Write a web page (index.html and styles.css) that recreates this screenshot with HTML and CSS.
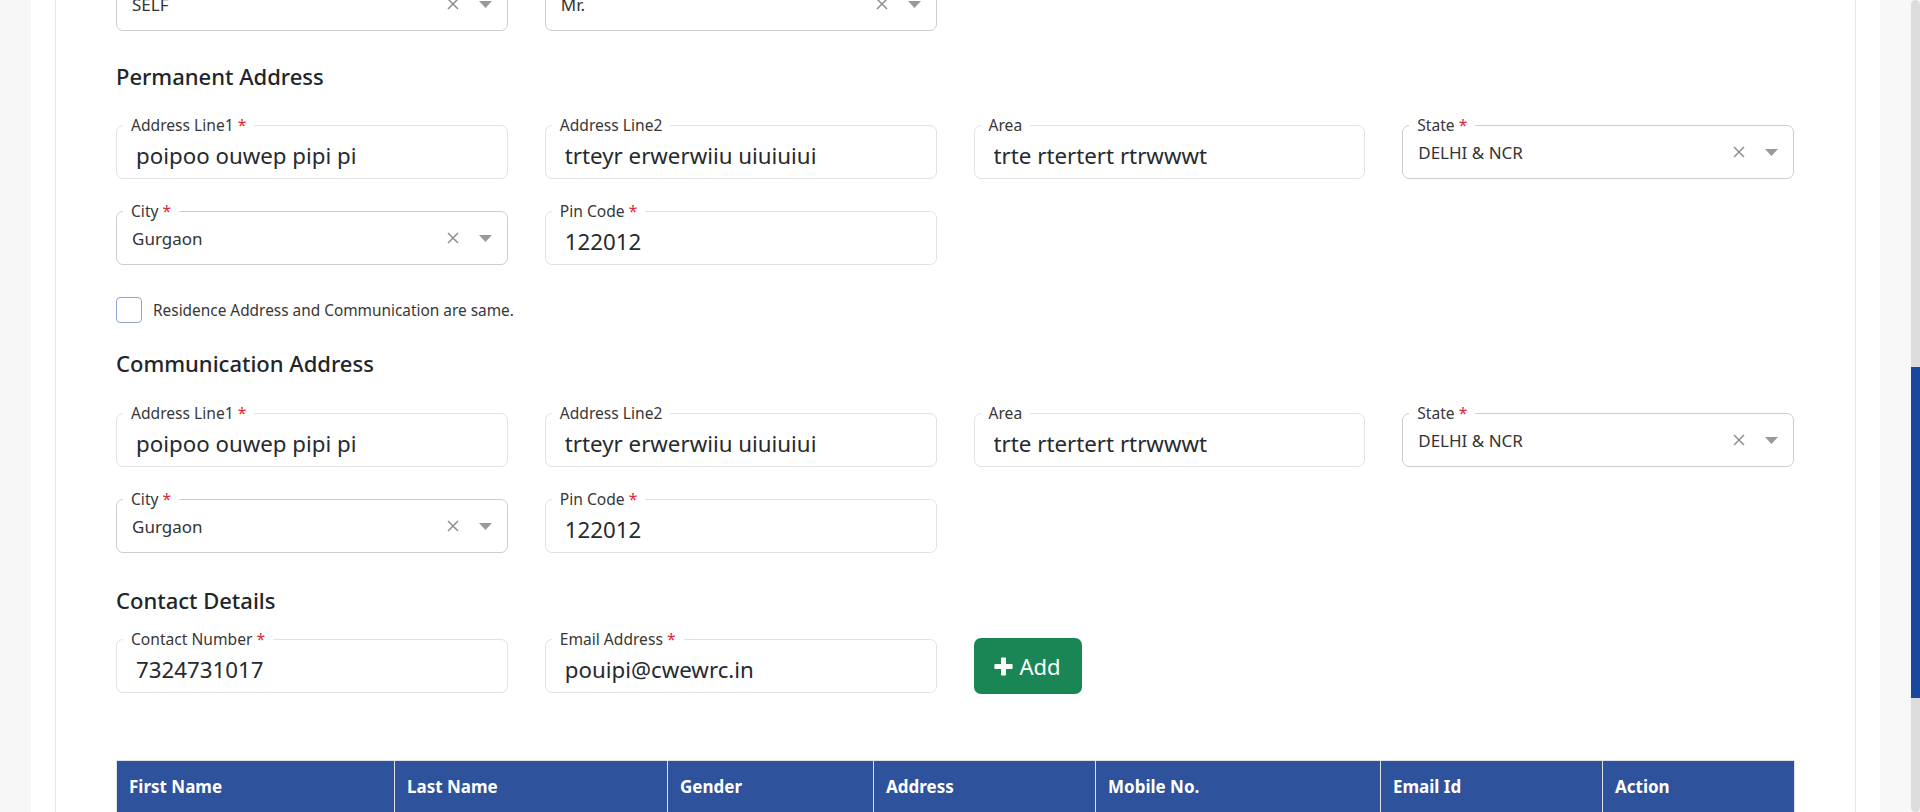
FILE: index.html
```html
<!DOCTYPE html>
<html lang="en">
<head>
<meta charset="utf-8">
<title>Address Details</title>
<link rel="stylesheet" href="styles.css">
</head>
<body>
<div class="page">
  <div class="wrap">
    <div class="card">
      <div class="row row-top">
        <div class="fld sel">
          <span class="sval">SELF</span>
          <span class="clr"><svg width="12" height="12" viewBox="0 0 12 12"><path d="M1 1L11 11M11 1L1 11" stroke="#8f8f8f" stroke-width="1.5"/></svg></span>
          <span class="arr"><svg width="13" height="7" viewBox="0 0 13 7"><path d="M0 0H13L6.5 7Z" fill="#999"/></svg></span>
        </div>
        <div class="fld sel">
          <span class="sval">Mr.</span>
          <span class="clr"><svg width="12" height="12" viewBox="0 0 12 12"><path d="M1 1L11 11M11 1L1 11" stroke="#8f8f8f" stroke-width="1.5"/></svg></span>
          <span class="arr"><svg width="13" height="7" viewBox="0 0 13 7"><path d="M0 0H13L6.5 7Z" fill="#999"/></svg></span>
        </div>
      </div>

      <h5 class="sec sec-first">Permanent Address</h5>
      <div class="row">
        <div class="fld"><label class="lbl">Address Line1 <span class="req">*</span></label><input class="inp" value="poipoo ouwep pipi pi"></div>
        <div class="fld"><label class="lbl">Address Line2</label><input class="inp" value="trteyr erwerwiiu uiuiuiui"></div>
        <div class="fld"><label class="lbl">Area</label><input class="inp" value="trte rtertert rtrwwwt"></div>
        <div class="fld sel"><label class="lbl">State <span class="req">*</span></label>
          <span class="sval">DELHI &amp; NCR</span>
          <span class="clr"><svg width="12" height="12" viewBox="0 0 12 12"><path d="M1 1L11 11M11 1L1 11" stroke="#8f8f8f" stroke-width="1.5"/></svg></span>
          <span class="arr"><svg width="13" height="7" viewBox="0 0 13 7"><path d="M0 0H13L6.5 7Z" fill="#999"/></svg></span>
        </div>
      </div>
      <div class="row row-next">
        <div class="fld sel"><label class="lbl">City <span class="req">*</span></label>
          <span class="sval">Gurgaon</span>
          <span class="clr"><svg width="12" height="12" viewBox="0 0 12 12"><path d="M1 1L11 11M11 1L1 11" stroke="#8f8f8f" stroke-width="1.5"/></svg></span>
          <span class="arr"><svg width="13" height="7" viewBox="0 0 13 7"><path d="M0 0H13L6.5 7Z" fill="#999"/></svg></span>
        </div>
        <div class="fld"><label class="lbl">Pin Code <span class="req">*</span></label><input class="inp" value="122012"></div>
      </div>

      <label class="chk"><input type="checkbox" class="box"><span>Residence Address and Communication are same.</span></label>

      <h5 class="sec sec-second">Communication Address</h5>
      <div class="row">
        <div class="fld"><label class="lbl">Address Line1 <span class="req">*</span></label><input class="inp" value="poipoo ouwep pipi pi"></div>
        <div class="fld"><label class="lbl">Address Line2</label><input class="inp" value="trteyr erwerwiiu uiuiuiui"></div>
        <div class="fld"><label class="lbl">Area</label><input class="inp" value="trte rtertert rtrwwwt"></div>
        <div class="fld sel"><label class="lbl">State <span class="req">*</span></label>
          <span class="sval">DELHI &amp; NCR</span>
          <span class="clr"><svg width="12" height="12" viewBox="0 0 12 12"><path d="M1 1L11 11M11 1L1 11" stroke="#8f8f8f" stroke-width="1.5"/></svg></span>
          <span class="arr"><svg width="13" height="7" viewBox="0 0 13 7"><path d="M0 0H13L6.5 7Z" fill="#999"/></svg></span>
        </div>
      </div>
      <div class="row row-next">
        <div class="fld sel"><label class="lbl">City <span class="req">*</span></label>
          <span class="sval">Gurgaon</span>
          <span class="clr"><svg width="12" height="12" viewBox="0 0 12 12"><path d="M1 1L11 11M11 1L1 11" stroke="#8f8f8f" stroke-width="1.5"/></svg></span>
          <span class="arr"><svg width="13" height="7" viewBox="0 0 13 7"><path d="M0 0H13L6.5 7Z" fill="#999"/></svg></span>
        </div>
        <div class="fld"><label class="lbl">Pin Code <span class="req">*</span></label><input class="inp" value="122012"></div>
      </div>

      <h5 class="sec sec-third">Contact Details</h5>
      <div class="row">
        <div class="fld"><label class="lbl">Contact Number <span class="req">*</span></label><input class="inp" value="7324731017"></div>
        <div class="fld"><label class="lbl">Email Address <span class="req">*</span></label><input class="inp" value="pouipi@cwewrc.in"></div>
        <div class="btn-cell">
          <button class="btn-add"><svg width="19" height="19" viewBox="0 0 19 19"><path d="M7 1.2a.8.8 0 0 1 .8-.8h3.4a.8.8 0 0 1 .8.8V7h5.8a.8.8 0 0 1 .8.8v3.4a.8.8 0 0 1-.8.8H12v5.8a.8.8 0 0 1-.8.8H7.8a.8.8 0 0 1-.8-.8V12H1.2a.8.8 0 0 1-.8-.8V7.8a.8.8 0 0 1 .8-.8H7z" fill="#fff"/></svg><span>Add</span></button>
        </div>
      </div>

      <table class="grid-table">
        <colgroup>
          <col class="c1"><col class="c2"><col class="c3"><col class="c4"><col class="c5"><col class="c6"><col class="c7">
        </colgroup>
        <thead>
          <tr>
            <th>First Name</th>
            <th>Last Name</th>
            <th>Gender</th>
            <th>Address</th>
            <th>Mobile No.</th>
            <th>Email Id</th>
            <th>Action</th>
          </tr>
        </thead>
      </table>
    </div>
  </div>
  <div class="gutter"></div>
  <div class="scrollbar"><div class="thumb"></div></div>
</div>
</body>
</html>
```

FILE: styles.css
```css
* { box-sizing: border-box; }

html, body {
  margin: 0;
  height: 100%;
  overflow: hidden;
}

body {
  font-family: "Noto Sans", "Open Sans", sans-serif;
  color: #212529;
  background: #f7f7f7;
}

.page {
  display: flex;
  height: 812px;
}

.wrap {
  margin-left: 31px;
  width: 1849px;
  flex: none;
  background: #fff;
  padding: 0 24px;
  overflow: hidden;
}

.card {
  display: flow-root;
  height: 100%;
  border-left: 1px solid #e4e4e4;
  border-right: 1px solid #e4e4e4;
  padding: 0 61px 0 60px;
}

.gutter {
  flex: 1;
  background: #f8f8f8;
}

.scrollbar {
  width: 9px;
  flex: none;
  background: #dcdcdc;
  border-radius: 5px;
}

.thumb {
  margin-top: 367px;
  height: 331px;
  background: #17479e;
}

/* rows */
.row {
  display: grid;
  grid-template-columns: repeat(4, 1fr);
  column-gap: 37px;
}

.row-top { margin-top: -23px; }
.row-next { margin-top: 32px; }

.sec {
  margin: 0;
  font-size: 22px;
  font-weight: 500;
  line-height: 30px;
  color: #212529;
}

.sec-first { margin: 30px 0 34px; }
.sec-second { margin: 25px 0 35px; }
.sec-third { margin: 32px 0 24px; }

/* fields */
.fld {
  position: relative;
  height: 54px;
  border: 1px solid #dfe2e6;
  border-radius: 7px;
  display: flex;
  align-items: center;
}

.fld.sel { border-color: #cdcdcd; }

.lbl {
  position: absolute;
  left: 6px;
  top: -10px;
  padding: 0 8px;
  background: #fff;
  font-size: 15.6px;
  line-height: 18px;
  color: #373737;
  white-space: nowrap;
}

.req { color: #e3242f; }

.inp {
  width: 100%;
  height: 100%;
  border: 0;
  background: transparent;
  padding: 6px 0 0 19px;
  font-family: "Noto Sans", "Open Sans", sans-serif;
  font-size: 22.3px;
  color: #262a2e;
  outline: none;
}

.sval {
  flex: 1;
  padding-left: 15px;
  font-size: 17px;
  color: #333;
}

.clr {
  display: flex;
  margin-right: 20px;
}

.arr {
  display: flex;
  margin-right: 15px;
}

/* checkbox */
.chk {
  display: flex;
  align-items: center;
  gap: 11px;
  margin-top: 32px;
  font-size: 15.4px;
  color: #373737;
}

.box {
  appearance: none;
  -webkit-appearance: none;
  margin: 0;
  width: 26px;
  height: 26px;
  border: 1px solid #8fa3d0;
  border-radius: 4px;
  background: #fff;
}

/* add button */
.btn-cell {
  display: flex;
  align-items: flex-start;
}

.btn-add {
  margin-top: -1px;
  height: 56px;
  width: 108px;
  display: flex;
  align-items: center;
  justify-content: center;
  gap: 6px;
  border: 0;
  border-radius: 7px;
  background: #1b8655;
  color: #fff;
  font-family: "Noto Sans", "Open Sans", sans-serif;
  font-size: 22px;
  padding: 0;
}

/* table */
.grid-table {
  margin-top: 66px;
  width: 100%;
  border-collapse: collapse;
  table-layout: fixed;
}

.c1 { width: 278px; }
.c2 { width: 273px; }
.c3 { width: 206px; }
.c4 { width: 222px; }
.c5 { width: 285px; }
.c6 { width: 222px; }
.c7 { width: 192px; }

.grid-table th {
  background: #2f529d;
  color: #fff;
  text-align: left;
  font-size: 17px;
  font-weight: 700;
  line-height: 24px;
  padding: 14px 12px;
  border: 1px solid #dee2e6;
}
```
